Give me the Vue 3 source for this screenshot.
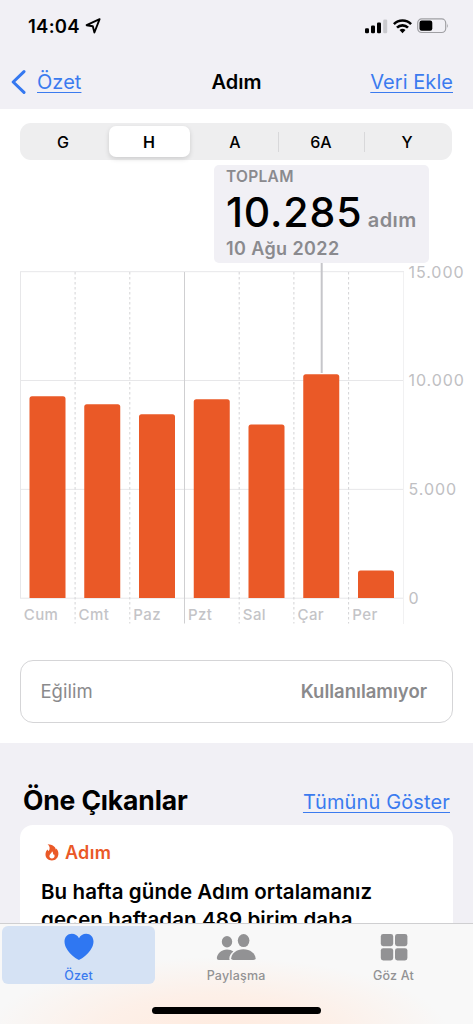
<template>
    <div class="screen">
        <header class="header">
            <div class="status">
                <div class="clock">
                    <span class="time">14:04</span>
                    <svg class="location" width="16" height="16" viewBox="0 0 16 16">
                        <path d="M14.6 1.2 L1.6 7.2 L7.8 8.3 L9.4 14.5 Z" />
                    </svg>
                </div>
                <div class="indicators">
                    <svg width="23" height="15" viewBox="0 0 23 15">
                        <rect x="0" y="9.2" width="4" height="5" rx="1.2" />
                        <rect x="6" y="6.4" width="4" height="7.8" rx="1.2" />
                        <rect x="12" y="3.4" width="4" height="10.8" rx="1.2" />
                        <rect x="18.2" y="0.6" width="4" height="13.6" rx="1.2" fill="#c9c9cd" />
                    </svg>
                    <svg class="wifi" width="19" height="15" viewBox="0 0 19 15">
                        <path d="M0.9 5.2 A12 12 0 0 1 18.1 5.2" />
                        <path d="M4 8.7 A7.6 7.6 0 0 1 15 8.7" />
                        <path class="dot" d="M6.5 11.1 A4.3 4.3 0 0 1 12.5 11.1 L9.5 14.2 Z" />
                    </svg>
                    <svg class="battery" width="32" height="16" viewBox="0 0 32 16">
                        <rect x="0.7" y="0.9" width="28" height="13.6" rx="4" fill="none" stroke="#a0a0a4" stroke-width="1.2" />
                        <rect x="2.5" y="2.6" width="12.8" height="10.2" rx="2.2" />
                        <path d="M30 5.4 Q31.6 7.7 30 10 Z" fill="#a0a0a4" />
                    </svg>
                </div>
            </div>
            <nav class="nav">
                <a class="back">
                    <svg width="16" height="26" viewBox="0 0 16 26">
                        <path d="M14 2.6 L3.2 13 L14 23.4" />
                    </svg>
                    <span class="link">Özet</span>
                </a>
                <h1 class="page-title">Adım</h1>
                <a class="link add">Veri Ekle</a>
            </nav>
        </header>

        <main class="panel">
            <div class="segments">
                <button
                    v-for="(range, i) in ranges"
                    :key="range"
                    class="segment"
                    :class="{ selected: range === selectedRange, divided: i > 2 }"
                    @click="selectedRange = range"
                >
                    <span>{{ range }}</span>
                </button>
            </div>

            <div class="callout">
                <div class="callout-label">TOPLAM</div>
                <div class="callout-value">
                    <span class="number">10.285</span>
                    <span class="unit">adım</span>
                </div>
                <div class="callout-date">10 Ağu 2022</div>
            </div>

            <svg class="chart" width="473" height="367" viewBox="0 263 473 367">
                <line v-for="tick in ticks" :key="tick.label" class="grid" x1="20" x2="404" :y1="yFor(tick.value)" :y2="yFor(tick.value)" />
                <line class="grid" x1="20.5" x2="20.5" y1="272" y2="598" />
                <line class="grid edge" x1="403.5" x2="403.5" y1="272" y2="624" />
                <line
                    v-for="i in 6"
                    :key="i"
                    :class="i === 3 ? 'week' : 'day'"
                    :x1="lineX(i)"
                    :x2="lineX(i)"
                    y1="272"
                    y2="623.5"
                />
                <line class="marker" x1="321.7" x2="321.7" y1="263" y2="373" />
                <path v-for="(day, i) in days" :key="day.name" class="bar" :d="barPath(day.steps, i)" />
                <text v-for="(day, i) in days" :key="day.name" class="day-label" :x="23.8 + i * 54.75" y="620.4">{{ day.name }}</text>
                <text v-for="tick in ticks" :key="tick.label" class="tick-label" x="408.5" :y="yFor(tick.value) + 5.9">{{ tick.label }}</text>
            </svg>

            <div class="trend">
                <span class="trend-name">Eğilim</span>
                <span class="trend-value">Kullanılamıyor</span>
            </div>
        </main>

        <section class="highlights">
            <div class="section-head">
                <h2>Öne Çıkanlar</h2>
                <a class="link show-all">Tümünü Göster</a>
            </div>
            <article class="card">
                <div class="card-tag">
                    <svg width="14" height="17" viewBox="0 0 14 17">
                        <path
                            fill-rule="evenodd"
                            d="M2.6 0.3 C7.6 0.4 10.5 2.8 10.8 5.6 C11.1 5.4 11.3 5 11.3 4.5 C12.8 6.1 13.5 8 13.4 10 C13.3 13.8 10.6 16.4 6.9 16.4 C3.2 16.4 0.6 14.1 0.5 10.8 C0.4 8.6 1.2 6.9 2.6 5.6 C2.8 6.4 3.2 6.8 3.8 7 C5.2 5 5 2.3 2.6 0.3 Z M7 7.3 C7.1 9.3 4.4 10 4.4 12.1 C4.4 13.7 5.4 14.6 6.9 14.6 C8.5 14.6 9.6 13.6 9.6 12.1 C9.6 11.2 9.3 10.5 8.8 9.9 C8.7 10.4 8.4 10.7 8 10.8 C8.3 9.5 8 8.2 7 7.3 Z"
                        />
                    </svg>
                    <span>Adım</span>
                </div>
                <p>Bu hafta günde Adım ortalamanız<br />geçen haftadan 489 birim daha</p>
            </article>
        </section>

        <footer class="tabbar">
            <div class="tabs">
                <a class="tab active">
                    <svg width="30" height="28" viewBox="0 0 30 28">
                        <path d="M15 27 C13.8 27 0.5 18.6 0.5 8.6 C0.5 4 3.6 0.8 7.8 0.8 C11 0.8 13.6 2.4 15 5.2 C16.4 2.4 19 0.8 22.2 0.8 C26.4 0.8 29.5 4 29.5 8.6 C29.5 18.6 16.2 27 15 27 Z" />
                    </svg>
                    <span>Özet</span>
                </a>
                <a class="tab">
                    <svg width="40" height="28" viewBox="0 0 40 28">
                        <ellipse cx="11" cy="8.7" rx="5.2" ry="5.7" />
                        <path d="M2.8 27 Q0.8 27 0.8 25 C1.4 20 5.6 16.4 11 16.4 C13.6 16.4 15.8 17.2 17.4 18.6 C14.8 20.4 13.4 23 13.3 25.4 Q13.3 26.4 13.8 27 Z" />
                        <ellipse cx="27.6" cy="7.6" rx="5.8" ry="6.5" />
                        <path d="M17.4 27 Q15.2 27 15.2 25.2 C15.6 20.4 20.6 16.2 27.4 16.2 C34.2 16.2 39.2 20.4 39.6 25.2 Q39.6 27 37.4 27 Z" />
                    </svg>
                    <span>Paylaşma</span>
                </a>
                <a class="tab">
                    <svg width="28" height="28" viewBox="0 0 28 28">
                        <rect x="0.8" y="1" width="12.4" height="12.2" rx="2.4" />
                        <rect x="15" y="1" width="12.4" height="12.2" rx="2.4" />
                        <rect x="0.8" y="15.2" width="12.4" height="12.2" rx="2.4" />
                        <rect x="15" y="15.2" width="12.4" height="12.2" rx="2.4" />
                    </svg>
                    <span>Göz At</span>
                </a>
            </div>
            <div class="home-indicator"></div>
        </footer>
    </div>
</template>

<script setup>
import { ref } from 'vue';

const ranges = ['G', 'H', 'A', '6A', 'Y'];
const selectedRange = ref('H');

const days = [
    { name: 'Cum', steps: 9280 },
    { name: 'Cmt', steps: 8910 },
    { name: 'Paz', steps: 8450 },
    { name: 'Pzt', steps: 9140 },
    { name: 'Sal', steps: 7980 },
    { name: 'Çar', steps: 10285 },
    { name: 'Per', steps: 1270 },
];

const ticks = [
    { value: 15000, label: '15.000' },
    { value: 10000, label: '10.000' },
    { value: 5000, label: '5.000' },
    { value: 0, label: '0' },
];

function yFor(value) {
    return 598.2 - (value / 15000) * 326.5;
}

function lineX(i) {
    return 20.4 + i * 54.7;
}

// bar with only the top corners rounded
function barPath(steps, i) {
    const x = 29.5 + i * 54.75;
    const y = yFor(steps);
    return `M${x} 598 V${y + 2.5} q0 -2.5 2.5 -2.5 h31 q2.5 0 2.5 2.5 V598 Z`;
}
</script>

<style>
body {
    margin: 0;
    background: #f1f0f5;
}
</style>

<style scoped>
.screen {
    position: relative;
    display: flex;
    flex-direction: column;
    width: 473px;
    height: 1024px;
    overflow: hidden;
    background: #f1f0f5;
    color: #000;
    font-family: Inter, "Liberation Sans", sans-serif;
}

.header {
    height: 109px;
}

.status {
    display: flex;
    justify-content: space-between;
    align-items: center;
    height: 52px;
    padding: 0 24px 0 28px;
}

.clock {
    display: flex;
    align-items: center;
    gap: 5px;
}

.time {
    font-size: 18.5px;
    font-weight: 600;
    letter-spacing: 0.25px;
}

.location path {
    fill: none;
    stroke: #000;
    stroke-width: 1.9;
    stroke-linejoin: round;
}

.indicators {
    display: flex;
    align-items: center;
    gap: 5px;
}

.wifi path {
    fill: none;
    stroke: #000;
    stroke-width: 2.6;
}

.wifi .dot {
    fill: #000;
    stroke: none;
}

.nav {
    display: grid;
    grid-template-columns: 1fr auto 1fr;
    align-items: center;
    height: 60px;
    padding: 0 20px;
}

.back {
    display: flex;
    align-items: center;
    gap: 11px;
    margin-left: -10px;
}

.back path {
    fill: none;
    stroke: #3578f0;
    stroke-width: 3;
    stroke-linecap: round;
    stroke-linejoin: round;
}

.link {
    color: #3b7bef;
    font-size: 20px;
    letter-spacing: 0.05px;
    text-decoration: underline;
    text-decoration-thickness: 1.3px;
    text-underline-offset: 3px;
}

.page-title {
    margin: 0;
    font-size: 20px;
    font-weight: 600;
    letter-spacing: 0;
}

.add {
    justify-self: end;
}

.panel {
    display: flex;
    flex-direction: column;
    height: 634px;
    background: #fff;
}

.segments {
    display: flex;
    box-sizing: border-box;
    height: 37px;
    margin: 14px 21px 0 20px;
    padding-right: 2px;
    flex-shrink: 0;
    border-radius: 11px;
    background: #eeeeef;
}

.segment {
    display: flex;
    flex: 1;
    padding: 3px 2.5px;
    border: 0;
    background: none;
    color: #000;
    font-family: inherit;
    font-size: 16px;
    font-weight: 500;
}

.segment span {
    display: flex;
    flex: 1;
    justify-content: center;
    align-items: center;
    height: 31px;
    border-radius: 7px;
}

.segment.selected span {
    background: #fff;
    box-shadow: 0 2px 5px rgba(0, 0, 0, 0.14);
    font-weight: 600;
}

.segment.divided {
    background: linear-gradient(#d8d8da, #d8d8da) left center / 1px 20px no-repeat;
}

.callout {
    box-sizing: border-box;
    flex-shrink: 0;
    width: 215px;
    height: 98px;
    margin: 5px 0 0 214px;
    padding: 2px 0 0 12px;
    border-radius: 5px;
    background: #f1f0f5;
    color: #8a8a8e;
    font-weight: 600;
    white-space: nowrap;
}

.callout-label {
    font-size: 15.5px;
    line-height: 20px;
    letter-spacing: 0.3px;
}

.callout-value {
    display: flex;
    align-items: baseline;
    gap: 5.5px;
    height: 52px;
}

.number {
    color: #000;
    font-size: 41px;
    font-weight: 500;
    line-height: 50px;
    letter-spacing: 0.85px;
}

.unit {
    font-size: 20px;
    line-height: 24px;
    letter-spacing: 0.4px;
}

.callout-date {
    font-size: 18px;
    line-height: 20px;
    letter-spacing: 0.4px;
}

.chart {
    display: block;
    flex-shrink: 0;
    overflow: visible;
}

.grid {
    stroke: #e7e7e9;
    stroke-width: 1;
}

.grid.edge {
    stroke: #f1f1f2;
}

.day {
    stroke: #d3d3d5;
    stroke-width: 1;
    stroke-dasharray: 2.5 2.5;
}

.week {
    stroke: #cfcfd1;
    stroke-width: 1;
}

.marker {
    stroke: #c6c6ca;
    stroke-width: 2;
}

.bar {
    fill: #ea5927;
}

.day-label {
    fill: #c4c4c7;
    font-size: 15px;
    font-weight: 500;
    letter-spacing: 0.4px;
}

.tick-label {
    fill: #c0c0c3;
    font-size: 16px;
    letter-spacing: 0.95px;
}

.trend {
    display: flex;
    justify-content: space-between;
    align-items: center;
    box-sizing: border-box;
    flex-shrink: 0;
    height: 63px;
    margin: 30px 20px 0;
    padding: 0 25px 2px 19.5px;
    border: 1.5px solid #d5d5d7;
    border-radius: 13px;
    color: #8a8a8c;
    font-size: 18.5px;
}

.trend-value {
    font-weight: 600;
}

.highlights {
    display: flex;
    flex-direction: column;
    flex: 1;
}

.section-head {
    display: flex;
    justify-content: space-between;
    align-items: center;
    height: 82px;
    padding: 32px 23px 0;
    box-sizing: border-box;
}

.section-head h2 {
    margin: 0;
    font-size: 26.5px;
    font-weight: 700;
    letter-spacing: -0.15px;
}

.show-all {
    padding-top: 4px;
    letter-spacing: 0.13px;
}

.card {
    flex: 1;
    margin: 0 20.5px 0 20px;
    padding: 18px 20px 0 21px;
    border-radius: 13px;
    background: #fff;
}

.card-tag {
    display: flex;
    align-items: center;
    gap: 6.5px;
    height: 19px;
    padding-left: 3.5px;
    color: #ea5927;
    font-size: 18px;
    font-weight: 600;
    letter-spacing: 0.3px;
}

.card-tag path {
    fill: #ea5927;
}

.card p {
    margin: 16px 0 0;
    font-size: 20.5px;
    font-weight: 600;
    line-height: 28px;
    letter-spacing: 0.09px;
    white-space: nowrap;
}

/* sits over the scrolling content */
.tabbar {
    position: absolute;
    left: 0;
    right: 0;
    bottom: 0;
    height: 100px;
    border-top: 1px solid #cfcfd1;
    background:
        radial-gradient(ellipse 230px 75px at 46% 108%, #ffebdf 0%, rgba(255, 236, 225, 0.7) 50%, rgba(255, 240, 232, 0) 100%),
        #f8f8f8;
}

.tabs {
    display: grid;
    grid-template-columns: 153px 1fr 153px;
    height: 57px;
    margin: 2px 3px 0 2.2px;
}

.tab {
    display: flex;
    flex-direction: column;
    align-items: center;
    padding-top: 7px;
    border-radius: 6px;
    color: #929294;
    font-size: 12.5px;
    font-weight: 500;
    line-height: 16px;
    letter-spacing: 0.2px;
}

.tab svg {
    fill: #929294;
    margin-bottom: 7px;
}

.tab.active {
    background: #d5e2f4;
    color: #3b7bef;
}

.tab.active svg {
    fill: #2f77f2;
}

.home-indicator {
    width: 169px;
    height: 6.5px;
    margin: 24px auto 0;
    border-radius: 4px;
    background: #000;
}
</style>
